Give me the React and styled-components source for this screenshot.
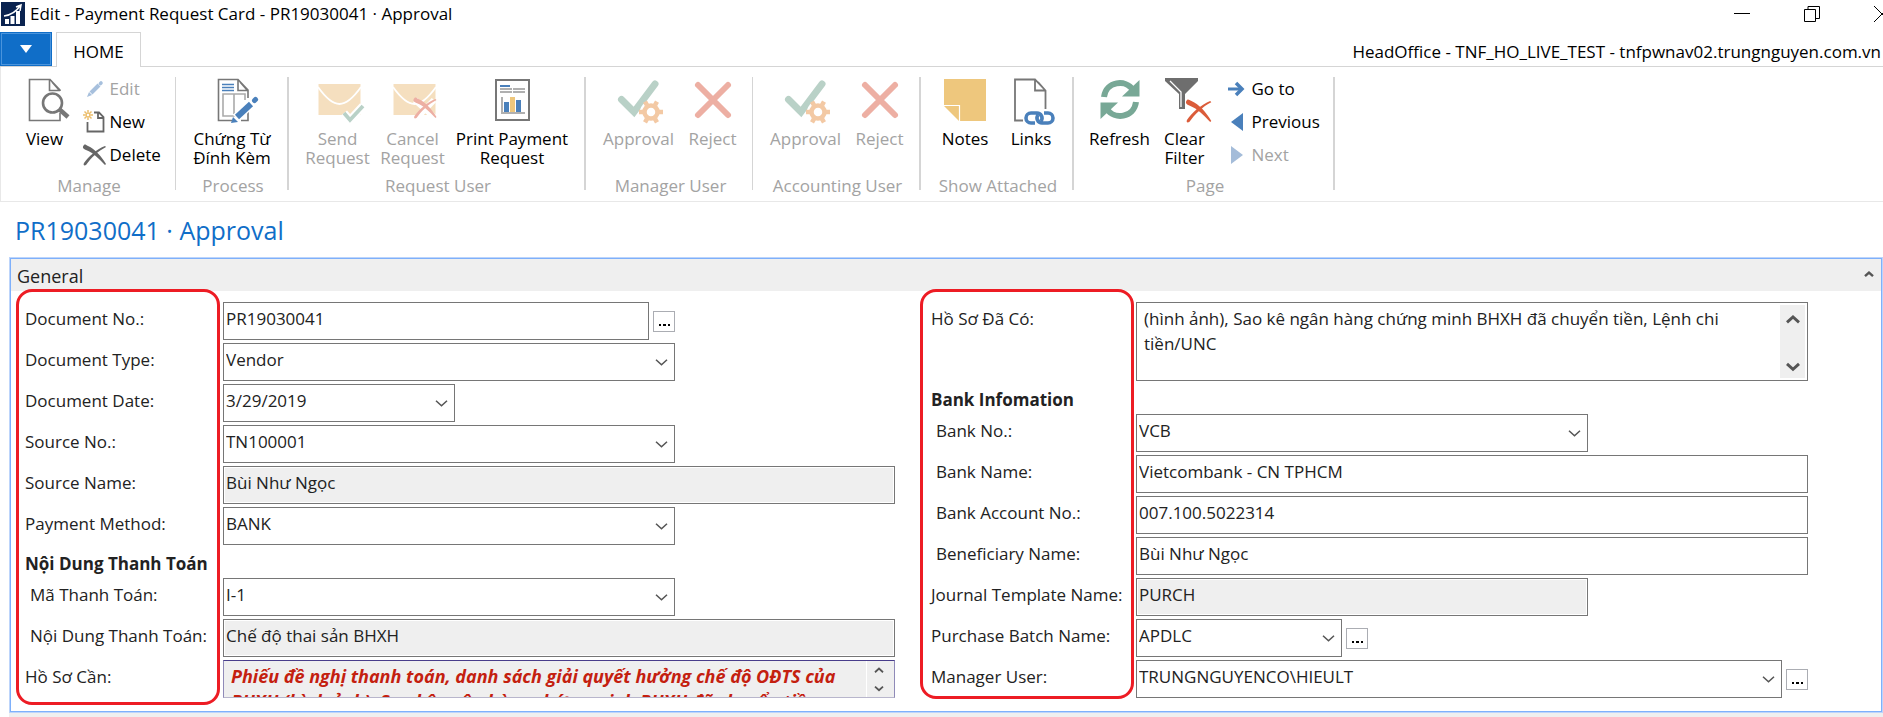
import React from 'react';
import styled, { createGlobalStyle } from 'styled-components';

const GlobalStyle = createGlobalStyle`
  *, *::before, *::after {
    box-sizing: border-box;
  }

  body {
    margin: 0;
    background: #fff;
    color: #222;
    overflow: hidden;
    font: 17px/24px "Open Sans", "Noto Sans", sans-serif;
  }

  button, input, select, textarea {
    font: inherit;
    color: inherit;
    margin: 0;
    border-radius: 0;
  }

  svg {
    display: block;
    flex: none;
    overflow: visible;
  }
`;

const TitleBar = styled.header`
  display: flex;
  align-items: center;
  gap: 5px;
  height: 32px;
  padding: 0 0 5px 1px;
  overflow: hidden;
  color: #000;
`;

TitleBar.Text = styled.span`
  flex: 1;
  white-space: nowrap;
`;

TitleBar.Controls = styled.div`
  display: flex;
  margin-right: -34px;
`;

TitleBar.Button = styled.button`
  width: 70px;
  height: 26px;
  padding: 0;
  border: 0;
  background: none;
  display: flex;
  align-items: center;
  justify-content: center;
`;

const TabBar = styled.nav`
  display: flex;
  height: 35px;
  border-bottom: 1px solid #d5d5d5;
  color: #000;
`;

TabBar.Menu = styled.button`
  width: 52px;
  height: 34px;
  padding: 0;
  background: #106ec8;
  border: 1px solid #106ec8;
  box-shadow: inset 0 0 0 1px #4a94dc;
  display: flex;
  align-items: center;
  justify-content: center;
`;

TabBar.Tab = styled.button`
  width: 85px;
  height: 35px;
  margin-left: 4px;
  padding: 3px 0 0;
  background: #fff;
  border: 1px solid #d5d5d5;
  border-bottom: 0;
`;

TabBar.Server = styled.span`
  margin-left: auto;
  padding: 8px 2px 0 0;
  white-space: nowrap;
`;

const Ribbon = styled.div`
  display: flex;
  height: 135px;
  padding-top: 10px;
  border-bottom: 1px solid #e8e8e8;
  box-shadow: inset 1px 0 #e8e8e8;
`;

Ribbon.Group = styled.section`
  width: ${({ $width }) => $width}px;
  height: 113px;
  flex: none;
  border-right: ${({ $line }) => $line || 2}px solid #d5d5d5;
`;

Ribbon.Tools = styled.div`
  display: flex;
  justify-content: center;
  height: 99px;
  padding-left: 1px;
`;

Ribbon.Caption = styled.div`
  padding-left: 3px;
  line-height: 20px;
  text-align: center;
  color: #a3a3a3;
`;

const Tool = styled.button`
  width: ${({ $width }) => $width}px;
  padding: 1px 0 0;
  border: 0;
  background: none;
  display: flex;
  flex-direction: column;
  align-items: center;
  gap: 7px;
  line-height: 19px;
  white-space: pre-line;
  color: #000;

  &:disabled {
    color: #a3a3a3;
  }
`;

const SmallTools = styled.div`
  display: flex;
  flex-direction: column;
  gap: 9px;
  width: ${({ $width }) => $width}px;
  margin-left: ${({ $gap }) => $gap}px;
`;

const SmallTool = styled.button`
  height: 24px;
  padding: 0;
  border: 0;
  background: none;
  display: flex;
  align-items: center;
  gap: 3px;
  line-height: 24px;
  white-space: nowrap;
  color: #000;

  &:disabled {
    color: #a3a3a3;
  }
`;

const PageTitle = styled.h1`
  margin: 0;
  padding: 11px 15px 10px;
  font-size: 25px;
  line-height: 34px;
  font-weight: 400;
  color: #106ec8;
`;

const Panel = styled.section`
  margin-left: 9px;
  border: 1px solid #bdd5fb;
  box-shadow: inset 0 0 0 1px #7eb0fb;
  padding: 1px;
`;

Panel.Header = styled.div`
  display: flex;
  align-items: center;
  justify-content: space-between;
  height: 32px;
  padding: 1px 8px 0 6px;
  background: #efefef;
`;

Panel.Title = styled.h2`
  margin: 0;
  font-size: 18px;
  font-weight: 400;
`;

Panel.Collapse = styled.button`
  padding: 0 0 2px;
  border: 0;
  background: none;
`;

Panel.Body = styled.form`
  display: grid;
  grid-template-columns: 870fr 877fr;
  gap: 36px;
  padding: 11px 73px 13px 14px;
`;

const NextPanel = styled.div`
  height: 8px;
  margin-left: 9px;
  background: #efefef;
`;

const Column = styled.div`
  position: relative;
  display: flex;
  flex-direction: column;
  gap: 3px;
`;

/* red frame drawn around the labels of a column */
const Highlight = styled.div`
  position: absolute;
  top: -13px;
  bottom: ${({ $bottom }) => $bottom}px;
  left: ${({ $left }) => $left}px;
  width: ${({ $width }) => $width}px;
  border: 3px solid #ed1c24;
  border-radius: 16px;
  pointer-events: none;
`;

const Row = styled.div`
  display: grid;
  grid-template-columns: ${({ $label }) => $label}px minmax(0, 1fr);
`;

Row.Label = styled.label`
  padding: 5px 0 0 ${({ $indent }) => ($indent ? 5 : 0)}px;
  white-space: nowrap;
`;

Row.Heading = styled.h3`
  margin: 0;
  height: 27px;
  font-size: 17px;
  line-height: 31px;
  font-weight: 700;
  white-space: nowrap;
`;

const Control = styled.div`
  display: flex;
  align-items: center;
  gap: 4px;
  width: 100%;
  max-width: ${({ $size }) => ({ small: '232px', medium: '452px' }[$size] || 'none')};
`;

const Input = styled.input`
  flex: 1;
  min-width: 0;
  height: 38px;
  padding: 0 2px 5px;
  border: 1px solid #767676;
  background: #fff;

  &:read-only {
    background: #efefef;
    box-shadow: inset 0 0 0 1px #fff;
  }
`;

const SelectBox = styled.div`
  position: relative;
  flex: 1;
  min-width: 0;

  select {
    appearance: none;
    display: block;
    width: 100%;
    height: 38px;
    padding: 0 30px 5px 2px;
    border: 1px solid #767676;
    background: #fff;
  }

  svg {
    position: absolute;
    top: 16px;
    right: 8px;
    pointer-events: none;
  }
`;

const Browse = styled.button`
  width: 22px;
  height: 21px;
  padding: 0 0 1px;
  display: flex;
  align-items: center;
  justify-content: center;
  border: 1px solid #abadb3;
  background: #fff;
`;

const Memo = styled.div`
  flex: 1;
  display: flex;
  height: ${({ $tall }) => ($tall ? 79 : 38)}px;
  padding: ${({ $tall }) => ($tall ? '2px' : '0')};
  border: 1px solid;
  border-color: ${({ $tall }) => ($tall ? '#767676' : '#483d8b #8f8ab8 #b8b6cc')};
  background: ${({ $tall }) => ($tall ? '#fff' : '#efefef')};

  textarea {
    flex: 1;
    min-width: 0;
    padding: ${({ $tall }) => ($tall ? '1px 0 0 5px' : '3px 0 0 7px')};
    border: 0;
    outline: 0;
    resize: none;
    overflow: hidden;
    background: none;
    line-height: 25px;
    ${({ $tall }) => !$tall && `
      color: #c4200f;
      font-size: 18px;
      font-weight: 700;
      font-style: italic;
      white-space: pre;
    `}
  }
`;

Memo.Scroll = styled.div`
  display: flex;
  flex-direction: column;
  justify-content: space-between;
  width: ${({ $tall }) => ($tall ? 25 : 28)}px;
  padding: ${({ $tall }) => ($tall ? '11px 0 8px' : '7px 4px 6px 0')};
  border-left: ${({ $tall }) => ($tall ? 0 : 1)}px solid #fff;
  background: #efefef;

  button {
    padding: 0;
    border: 0;
    background: none;
    display: flex;
    justify-content: center;
  }
`;

const Chevron = ({ up, size = 11, weight = 1.4 }) => (
  <svg width={size} height={size * 0.6} viewBox="0 0 10 6" fill="none" stroke="#555" strokeWidth={weight}>
    <path d={up ? 'M0 5.3 5 0.7 10 5.3' : 'M0 0.7 5 5.3 10 0.7'} />
  </svg>
);

const Icon = ({ size = 44, children }) => (
  <svg width={size} height={size} viewBox={`0 0 ${size} ${size}`} fill="none">
    {children}
  </svg>
);

const AppLogo = () => (
  <Icon size={24}>
    <path fill="#0a2350" d="M0 0h24v24H0z" />
    <path fill="#fff" d="M4 17h4v5H4zM9.500 14h4v8h-4zM15 9h4v13h-4z" />
    <path d="M3 14c7-1 12-4 16-10M15 5l5-2-1 6" stroke="#fff" strokeWidth="1.500" />
  </Icon>
);

const ViewIcon = () => (
  <Icon>
    <path d="M37 13V12L27 1.500H6.500V42.500H37V35M26.500 1.500V12.500H37M29 4l7 8" stroke="#777" strokeWidth="1.600" />
    <circle cx="29.500" cy="25" r="9.500" fill="#fff" stroke="#777" strokeWidth="2.600" />
    <path d="m36 31 9 8" stroke="#777" strokeWidth="4.500" />
  </Icon>
);

const EditIcon = () => (
  <Icon size={24}>
    <path d="m8 16 8-8" stroke="#a7c0dd" strokeWidth="4" />
    <path d="m17.500 6.500 .5-.5" stroke="#a7c0dd" strokeWidth="3.600" strokeLinecap="round" />
    <path d="m4 20 2-5 3 3z" fill="#a7c0dd" />
  </Icon>
);

const NewIcon = () => (
  <Icon size={24}>
    <path d="M4.500 12v9.500h16V7L16 2.500h-5M15 3v5h5" stroke="#666" strokeWidth="1.800" />
    <path d="M5 0v10M0 5h10M1.500 1.500l7 7M8.500 1.500l-7 7" stroke="#ecbe6c" strokeWidth="1.500" />
    <circle cx="5" cy="5" r="1.200" fill="#fff" />
  </Icon>
);

const Scratch = ({ color }) => (
  <g fill={color}>
    <path d="M1 0C-1 2 0 4 3 5c8 3 13 9 19 15l1-1C18 11 12 4 5 1 3 0 2-1 1 0z" />
    <path d="M22 1C14 4 5 12 1 18c-1 2 0 3 2 2C8 13 15 6 23 2z" />
  </g>
);

const DeleteIcon = () => (
  <Icon size={24}>
    <g transform="translate(0 2)">
      <Scratch color="#666" />
    </g>
  </Icon>
);

const AttachIcon = () => (
  <Icon>
    <path d="M38 20V12L28 1.500H8.500V42.500H22M38 33v9.500h-7M28 1.500V12.500H38M30 4l7 8" stroke="#777" strokeWidth="1.600" />
    <path d="M12 6.500h12M12 9.500h12M12 12.500h12" stroke="#4a80bb" strokeWidth="1.400" />
    <path d="M28 38H13V16h22v6M24 16v20" stroke="#aaa" strokeWidth="1.600" />
    <path d="M26 40 43 24" stroke="#fff" strokeWidth="9" />
    <path d="M27 39 41 26" stroke="#4a80bb" strokeWidth="6" />
    <path d="m44.500 22.500 1-1" stroke="#4a80bb" strokeWidth="5" strokeLinecap="round" />
    <path d="m21 45 2-6 5 5z" fill="#4a80bb" />
  </Icon>
);

const Envelope = () => (
  <>
    <path d="M2.500 6h42v31h-42z" fill="#f5dfbf" />
    <path d="M2 9c5 7 13 17 21.500 17S40 16 45 9" stroke="#fff" strokeWidth="1.800" />
  </>
);

const SendIcon = () => (
  <Icon>
    <Envelope />
    <path d="m28 35 6 7 13-14" stroke="#fff" strokeWidth="8" />
    <path d="m28 35 6 7 13-14" stroke="#b9d1c7" strokeWidth="3.800" />
  </Icon>
);

const CancelIcon = () => (
  <Icon>
    <Envelope />
    <path d="m24 22 20 18M43 22 25 41" stroke="#fff" strokeWidth="6" />
    <g transform="translate(22.500 20)">
      <Scratch color="#edafa3" />
    </g>
  </Icon>
);

const PrintIcon = () => (
  <Icon>
    <path d="M6 2h33v40H6z" stroke="#777" strokeWidth="2" />
    <path fill="#4a80bb" d="M10 7h10v2H10zM14 24h5v10h-5zM26 22h5v12h-5z" />
    <path fill="#b0b0b0" d="M10 10h12v2H10zM23 10h12v2H23zM10 13h12v2H10zM23 13h12v2H23zM11 19h2v15h22v2H11z" />
    <path fill="#eec77d" d="M20 19h5v15h-5z" />
  </Icon>
);

const ApprovalIcon = () => (
  <Icon>
    <path d="M4.500 21.500 17 34 38 6" stroke="#b9d1c7" strokeWidth="7" strokeLinecap="round" />
    <circle cx="34" cy="34" r="11" fill="#fff" />
    <circle cx="34" cy="34" r="6.500" stroke="#f3c9a4" strokeWidth="4.500" />
    <path
      d="M42 34h4M38 40.900l2 3.500M30 40.900l-2 3.500M26 34h-4M30 27.100l-2-3.500M38 27.100l2-3.500"
      stroke="#f3c9a4"
      strokeWidth="4.500"
    />
  </Icon>
);

const RejectIcon = () => (
  <Icon>
    <path d="m7 7 30 30M37 7 7 37" stroke="#edafa3" strokeWidth="6" strokeLinecap="round" />
  </Icon>
);

const NotesIcon = () => (
  <Icon>
    <path d="M1 1h42v42H16L1 28z" fill="#eec77d" />
    <path d="M1 27.500h15.500V43" stroke="#fff" strokeWidth="1.200" />
  </Icon>
);

const LinksIcon = () => (
  <Icon>
    <path d="M14 42.500H6V1.500h20l10.500 11V31M26 1.500v11h10.500M29 4l7 8" stroke="#777" strokeWidth="1.800" />
    <path
      d="M26 45h-4a5 5 0 0 1 0-10h6a5 5 0 0 1 4 8M35 35h4a5 5 0 0 1 0 10h-6a5 5 0 0 1-4-8"
      stroke="#4a80bb"
      strokeWidth="3.600"
    />
  </Icon>
);

const RefreshIcon = () => (
  <Icon>
    <path d="M6 19C8 3 28 1 35 12" stroke="#78a896" strokeWidth="6" />
    <path d="M41.500 2v16.500H24z" fill="#78a896" />
    <path d="M38 24c-2 16-22 18-29 7" stroke="#78a896" strokeWidth="6" />
    <path d="M2.500 41V24.500H20z" fill="#78a896" />
  </Icon>
);

const ClearFilterIcon = () => (
  <Icon>
    <path d="M2 0h33v3L22 16v15h-6V16L2 3z" fill="#6e6e6e" />
    <path d="M7 3 18 14v15" stroke="#fff" strokeWidth="1.300" />
    <g transform="translate(23 22) scale(1.100)">
      <Scratch color="#db5c3a" />
    </g>
  </Icon>
);

const GoToIcon = () => (
  <Icon size={22}>
    <path d="M1 11h13" stroke="#4a80bb" strokeWidth="3" />
    <path d="m9 5 6 6-6 6" stroke="#4a80bb" strokeWidth="3.500" />
  </Icon>
);

const PreviousIcon = () => (
  <Icon size={22}>
    <path d="M16 2v18L4 11z" fill="#4a80bb" />
  </Icon>
);

const NextIcon = () => (
  <Icon size={22}>
    <path d="M4 2v18l12-9z" fill="#a4bcd9" />
  </Icon>
);

const groups = [
  {
    caption: 'Manage',
    width: 176,
    line: 1,
    tools: [{ label: 'View', width: 70, icon: ViewIcon }],
    small: [
      { label: 'Edit', icon: EditIcon, disabled: true },
      { label: 'New', icon: NewIcon },
      { label: 'Delete', icon: DeleteIcon },
    ],
    smallWidth: 84,
    smallGap: 3,
  },
  {
    caption: 'Process',
    width: 113,
    tools: [{ label: 'Chứng Từ\nĐính Kèm', width: 100, icon: AttachIcon }],
  },
  {
    caption: 'Request User',
    width: 297,
    tools: [
      { label: 'Send\nRequest', width: 75, icon: SendIcon, disabled: true },
      { label: 'Cancel\nRequest', width: 75, icon: CancelIcon, disabled: true },
      { label: 'Print Payment\nRequest', width: 124, icon: PrintIcon },
    ],
  },
  {
    caption: 'Manager User',
    width: 167,
    line: 1,
    tools: [
      { label: 'Approval', width: 86, icon: ApprovalIcon, disabled: true },
      { label: 'Reject', width: 62, icon: RejectIcon, disabled: true },
    ],
  },
  {
    caption: 'Accounting User',
    width: 168,
    tools: [
      { label: 'Approval', width: 86, icon: ApprovalIcon, disabled: true },
      { label: 'Reject', width: 62, icon: RejectIcon, disabled: true },
    ],
  },
  {
    caption: 'Show Attached',
    width: 153,
    tools: [
      { label: 'Notes', width: 68, icon: NotesIcon },
      { label: 'Links', width: 64, icon: LinksIcon },
    ],
  },
  {
    caption: 'Page',
    width: 261,
    tools: [
      { label: 'Refresh', width: 68, icon: RefreshIcon },
      { label: 'Clear\nFilter', width: 62, icon: ClearFilterIcon },
    ],
    small: [
      { label: 'Go to', icon: GoToIcon },
      { label: 'Previous', icon: PreviousIcon },
      { label: 'Next', icon: NextIcon, disabled: true },
    ],
    smallWidth: 96,
    smallGap: 11,
  },
];

const leftFields = [
  { label: 'Document No.:', value: 'PR19030041', size: 'medium', browse: true },
  { label: 'Document Type:', value: 'Vendor', type: 'select', size: 'medium' },
  { label: 'Document Date:', value: '3/29/2019', type: 'select', size: 'small' },
  { label: 'Source No.:', value: 'TN100001', type: 'select', size: 'medium' },
  { label: 'Source Name:', value: 'Bùi Như Ngọc', readOnly: true },
  { label: 'Payment Method:', value: 'BANK', type: 'select', size: 'medium' },
  { heading: 'Nội Dung Thanh Toán' },
  { label: 'Mã Thanh Toán:', value: 'I-1', type: 'select', size: 'medium', indent: true },
  { label: 'Nội Dung Thanh Toán:', value: 'Chế độ thai sản BHXH', readOnly: true, indent: true },
  {
    label: 'Hồ Sơ Cần:',
    type: 'memo',
    value:
      'Phiếu đề nghị thanh toán, danh sách giải quyết hưởng chế độ OĐTS của\nBHXH (hình ảnh), Sao kê ngân hàng chứng minh BHXH đã chuyển tiền',
  },
];

const rightFields = [
  {
    label: 'Hồ Sơ Đã Có:',
    type: 'memo',
    tall: true,
    value: '(hình ảnh), Sao kê ngân hàng chứng minh BHXH đã chuyển tiền, Lệnh chi\ntiền/UNC',
  },
  { heading: 'Bank Infomation' },
  { label: 'Bank No.:', value: 'VCB', type: 'select', size: 'medium', indent: true },
  { label: 'Bank Name:', value: 'Vietcombank - CN TPHCM', indent: true },
  { label: 'Bank Account No.:', value: '007.100.5022314', indent: true },
  { label: 'Beneficiary Name:', value: 'Bùi Như Ngọc', indent: true },
  { label: 'Journal Template Name:', value: 'PURCH', readOnly: true, size: 'medium' },
  { label: 'Purchase Batch Name:', value: 'APDLC', type: 'select', size: 'small', browse: true },
  { label: 'Manager User:', value: 'TRUNGNGUYENCO\\HIEULT', type: 'select', browse: true },
];

const RibbonGroup = ({ caption, width, line, tools, small, smallWidth, smallGap }) => (
  <Ribbon.Group $width={width} $line={line}>
    <Ribbon.Tools>
      {tools.map(({ label, width: toolWidth, icon: ToolIcon, disabled }) => (
        <Tool key={label} type="button" $width={toolWidth} disabled={disabled}>
          <ToolIcon />
          <span>{label}</span>
        </Tool>
      ))}
      {small && (
        <SmallTools $width={smallWidth} $gap={smallGap}>
          {small.map(({ label, icon: ToolIcon, disabled }) => (
            <SmallTool key={label} type="button" disabled={disabled}>
              <ToolIcon />
              {label}
            </SmallTool>
          ))}
        </SmallTools>
      )}
    </Ribbon.Tools>
    <Ribbon.Caption>{caption}</Ribbon.Caption>
  </Ribbon.Group>
);

const FieldControl = ({ id, type, value, readOnly, tall }) => {
  if (type === 'select') {
    return (
      <SelectBox>
        <select id={id} defaultValue={value}>
          <option>{value}</option>
        </select>
        <Chevron />
      </SelectBox>
    );
  }

  if (type === 'memo') {
    return (
      <Memo $tall={tall}>
        <textarea id={id} defaultValue={value} readOnly={!tall} />
        <Memo.Scroll $tall={tall}>
          <button type="button" aria-label="Scroll up">
            <Chevron up size={tall ? 12 : 8} weight={tall ? 2.4 : 2.2} />
          </button>
          <button type="button" aria-label="Scroll down">
            <Chevron size={tall ? 12 : 8} weight={tall ? 2.4 : 2.2} />
          </button>
        </Memo.Scroll>
      </Memo>
    );
  }

  return <Input id={id} defaultValue={value} readOnly={readOnly} />;
};

const Fields = ({ name, items, labelWidth }) =>
  items.map((item, index) => {
    if (item.heading) {
      return <Row.Heading key={item.heading}>{item.heading}</Row.Heading>;
    }

    const id = `${name}-${index}`;

    return (
      <Row key={id} $label={labelWidth}>
        <Row.Label htmlFor={id} $indent={item.indent}>{item.label}</Row.Label>
        <Control $size={item.size}>
          <FieldControl id={id} {...item} />
          {item.browse && (
            <Browse type="button" aria-label={`Browse ${item.label}`}>
              <svg width="11" height="2" viewBox="0 0 11 2">
                <path d="M0 0h2v2H0zM4 0h3v2H4zM9 0h2v2H9z" transform="translate(0 4)" />
              </svg>
            </Browse>
          )}
        </Control>
      </Row>
    );
  });

export default () => (
  <>
    <GlobalStyle />
    <TitleBar>
      <AppLogo />
      <TitleBar.Text>Edit - Payment Request Card - PR19030041 · Approval</TitleBar.Text>
      <TitleBar.Controls>
        <TitleBar.Button type="button" aria-label="Minimize">
          <svg width="16" height="16" stroke="#000"><path d="M0 7.500h16" /></svg>
        </TitleBar.Button>
        <TitleBar.Button type="button" aria-label="Restore">
          <svg width="16" height="16" fill="none" stroke="#000"><path d="M.5 3.500h11v12H.5zM4 3V.5h11.500v12H12" /></svg>
        </TitleBar.Button>
        <TitleBar.Button type="button" aria-label="Close">
          <svg width="16" height="16" stroke="#000"><path d="m0 0 16 16M16 0 0 16" /></svg>
        </TitleBar.Button>
      </TitleBar.Controls>
    </TitleBar>
    <TabBar>
      <TabBar.Menu type="button" aria-label="Application menu">
        <svg width="12" height="8" fill="#fff"><path d="M0 0h12L6 8z" /></svg>
      </TabBar.Menu>
      <TabBar.Tab type="button">HOME</TabBar.Tab>
      <TabBar.Server>HeadOffice - TNF_HO_LIVE_TEST - tnfpwnav02.trungnguyen.com.vn</TabBar.Server>
    </TabBar>
    <Ribbon>
      {groups.map((group) => <RibbonGroup key={group.caption} {...group} />)}
    </Ribbon>
    <main>
      <PageTitle>PR19030041 · Approval</PageTitle>
      <Panel>
        <Panel.Header>
          <Panel.Title>General</Panel.Title>
          <Panel.Collapse type="button" aria-label="Collapse General">
            <Chevron up size={8} weight={3} />
          </Panel.Collapse>
        </Panel.Header>
        <Panel.Body>
          <Column>
            <Fields name="general" items={leftFields} labelWidth={198} />
            <Highlight $left={-9} $width={204} $bottom={-7} />
          </Column>
          <Column>
            <Fields name="bank" items={rightFields} labelWidth={205} />
            <Highlight $left={-11} $width={214} $bottom={-1} />
          </Column>
        </Panel.Body>
      </Panel>
      <NextPanel />
    </main>
  </>
);
